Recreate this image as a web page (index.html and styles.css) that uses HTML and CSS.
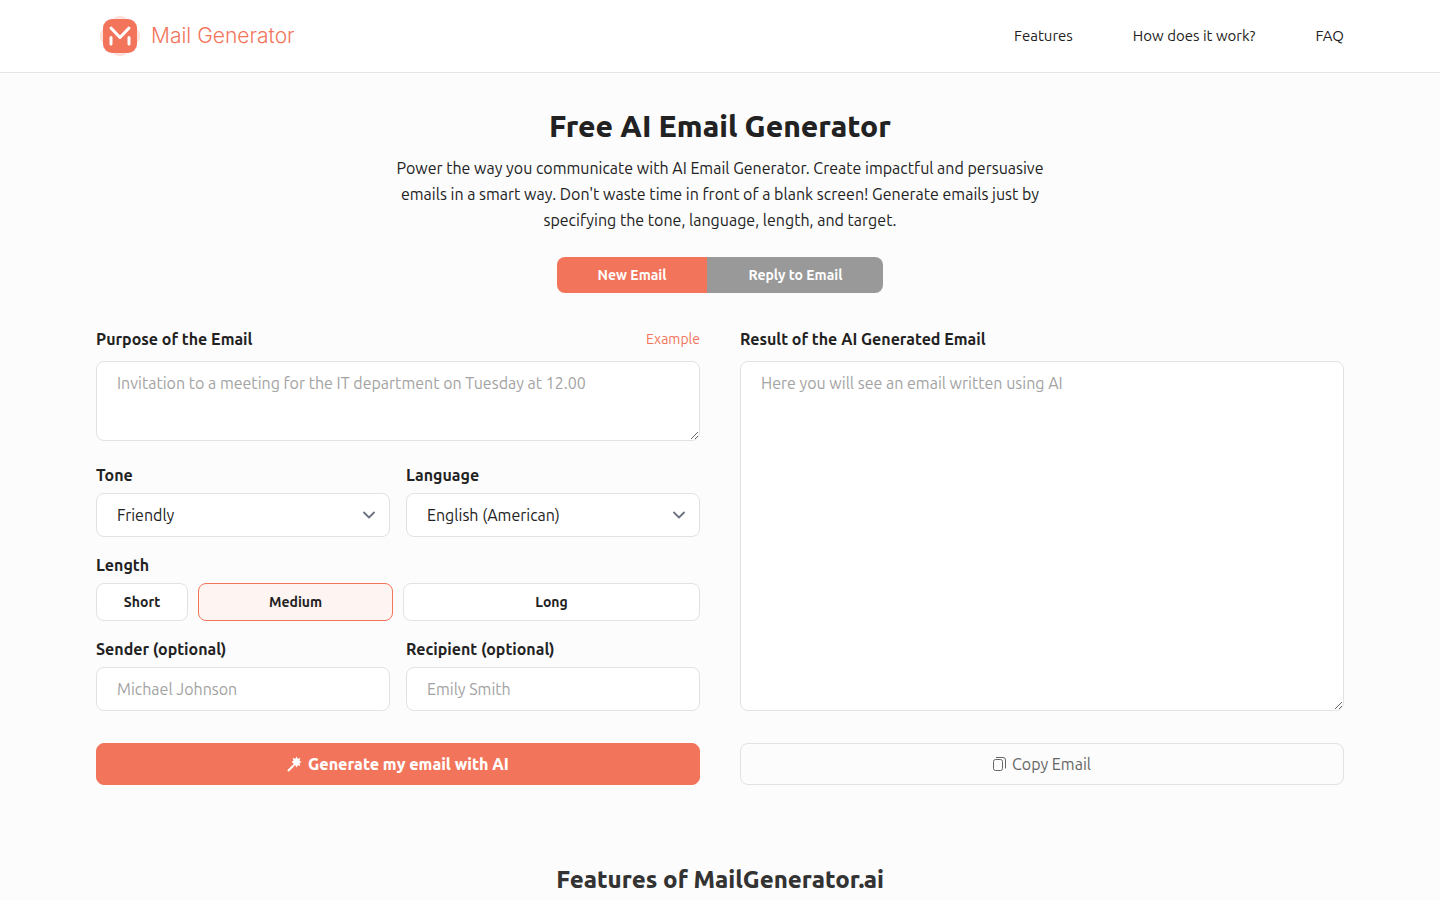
FILE: index.html
```html
<!DOCTYPE html>
<html lang="en">
<head>
    <meta charset="utf-8">
    <title>Free AI Email Generator</title>
    <meta name="viewport" content="width=device-width, initial-scale=1.0">
    <link rel="stylesheet" href="styles.css">
</head>
<body>
    <header class="header">
        <div class="container header-inner">
            <a class="logo" href="#">
                <svg class="logo-icon" width="40" height="40" viewBox="0 0 40 40" fill="none">
                    <rect x="3" y="3" width="34" height="34" rx="9" transform="rotate(45 20 20)" fill="#fde3de"/>
                    <rect x="3" y="3" width="34" height="34" rx="9" fill="#f2755b"/>
                    <path d="M11 12l9 9.500 9-9.500M11 21.500v6.500M29 21.500v6.500" stroke="#fff" stroke-width="3" stroke-linecap="round" stroke-linejoin="round"/>
                </svg>
                <span class="logo-text">Mail Generator</span>
            </a>
            <nav class="nav">
                <a href="#features">Features</a>
                <a href="#how">How does it work?</a>
                <a href="#faq">FAQ</a>
            </nav>
        </div>
    </header>

    <main class="container">
        <section class="intro">
            <h1>Free AI Email Generator</h1>
            <p>Power the way you communicate with AI Email Generator. Create impactful and persuasive emails in a smart way. Don't waste time in front of a blank screen! Generate emails just by specifying the tone, language, length, and target.</p>
            <div class="tabs">
                <button type="button" class="tab tab-active">New Email</button>
                <button type="button" class="tab">Reply to Email</button>
            </div>
        </section>

        <form class="generator">
            <div class="column">
                <div class="label-row">
                    <label for="purpose">Purpose of the Email</label>
                    <a class="example" href="#example">Example</a>
                </div>
                <textarea id="purpose" class="purpose" placeholder="Invitation to a meeting for the IT department on Tuesday at 12.00"></textarea>

                <div class="pair">
                    <div class="field">
                        <label for="tone">Tone</label>
                        <div class="select-wrap">
                            <select id="tone">
                                <option>Friendly</option>
                                <option>Formal</option>
                            </select>
                            <svg class="chevron" width="20" height="20" viewBox="0 0 20 20" fill="none"><path d="M5 7.500l5 5 5-5" stroke="#6b7280" stroke-width="1.800" stroke-linecap="round" stroke-linejoin="round"/></svg>
                        </div>
                    </div>
                    <div class="field">
                        <label for="language">Language</label>
                        <div class="select-wrap">
                            <select id="language">
                                <option>English (American)</option>
                                <option>English (British)</option>
                            </select>
                            <svg class="chevron" width="20" height="20" viewBox="0 0 20 20" fill="none"><path d="M5 7.500l5 5 5-5" stroke="#6b7280" stroke-width="1.800" stroke-linecap="round" stroke-linejoin="round"/></svg>
                        </div>
                    </div>
                </div>

                <div class="field">
                    <span class="label" id="length-label">Length</span>
                    <div class="lengths" role="group" aria-labelledby="length-label">
                        <button type="button" class="length">Short</button>
                        <button type="button" class="length length-active">Medium</button>
                        <button type="button" class="length">Long</button>
                    </div>
                </div>

                <div class="pair">
                    <div class="field">
                        <label for="sender">Sender (optional)</label>
                        <input id="sender" type="text" placeholder="Michael Johnson">
                    </div>
                    <div class="field">
                        <label for="recipient">Recipient (optional)</label>
                        <input id="recipient" type="text" placeholder="Emily Smith">
                    </div>
                </div>

                <button type="submit" class="action generate">
                    <svg width="16" height="16" viewBox="0 0 16 16" fill="#fff"><path d="M14.500 6l-2 1.200.8 2.800-2.600-.8L9.500 11.500l-1.200-2.300-2.600.8.800-2.800L4.500 6l2-1.200L5.700 2l2.600.8L9.500.500l1.200 2.300 2.600-.8-.8 2.800z"/><path d="M1.500 14.500l4.500-4.500" stroke="#fff" stroke-width="2" stroke-linecap="round"/></svg>
                    Generate my email with AI
                </button>
            </div>

            <div class="column">
                <div class="label-row">
                    <label for="result">Result of the AI Generated Email</label>
                </div>
                <textarea id="result" class="result" placeholder="Here you will see an email written using AI"></textarea>
                <button type="button" class="action copy">
                    <svg width="14" height="16" viewBox="0 0 14 16" fill="none" stroke="#666"><rect x=".5" y="3.500" width="9" height="11" rx="2"/><path d="M3 1.500h7a2.500 2.500 0 0 1 2.500 2.500v8.500"/></svg>
                    Copy Email
                </button>
            </div>
        </form>

        <section class="features" id="features">
            <h2>Features of MailGenerator.ai</h2>
        </section>
    </main>
</body>
</html>
```
FILE: styles.css
```css
* {
    box-sizing: border-box;
}

body {
    margin: 0;
    background-color: #fcfcfc;
    color: #222;
    font-family: Ubuntu, "Open Sans", sans-serif;
    font-size: 16px;
    line-height: 24px;
}

a {
    color: inherit;
    text-decoration: none;
}

button,
input,
select,
textarea {
    font: inherit;
    color: inherit;
}

button {
    cursor: pointer;
}

.container {
    max-width: 1280px;
    margin: 0 auto;
    padding: 0 16px;
}

.header {
    background-color: #fff;
    border-bottom: 1px solid #e5e5e9;
}

.header-inner {
    display: flex;
    align-items: center;
    justify-content: space-between;
    height: 72px;
}

.logo {
    display: flex;
    align-items: center;
    gap: 11px;
    padding-left: 4px;
}

.logo-text {
    color: #f2755b;
    font-family: Inter, sans-serif;
    font-size: 21px;
    font-weight: 300;
}

.nav {
    display: flex;
    gap: 60px;
    font-size: 15px;
}

.intro {
    display: flex;
    flex-direction: column;
    align-items: center;
    padding-top: 36px;
    text-align: center;
}

h1 {
    margin: 0 0 12px;
    font-size: 30px;
    font-weight: 800;
    line-height: 34px;
}

.intro p {
    max-width: 672px;
    margin: 0 0 24px;
    line-height: 26px;
}

.tabs {
    display: flex;
    border-radius: 8px;
    overflow: hidden;
}

.tab {
    height: 36px;
    padding: 0 41px;
    border: 0;
    background-color: #999;
    color: #fff;
    font-size: 14px;
    font-weight: 600;
}

.tab-active {
    background-color: #f2755b;
}

.generator {
    display: grid;
    grid-template-columns: 1fr 1fr;
    gap: 40px;
    padding-top: 34px;
}

.column {
    display: flex;
    flex-direction: column;
}

.label-row {
    display: flex;
    justify-content: space-between;
    margin-bottom: 10px;
}

label,
.label {
    font-weight: 600;
}

.example {
    color: #f2755b;
    font-size: 14px;
}

textarea,
select,
input {
    display: block;
    width: 100%;
    padding: 9px 20px;
    border: 1px solid #e2e2e2;
    border-radius: 8px;
    background-color: #fff;
}

textarea::placeholder,
input::placeholder {
    color: #a3a3a3;
}

.purpose {
    height: 80px;
    margin-bottom: 22px;
}

.result {
    flex: 1;
}

select {
    height: 44px;
    appearance: none;
}

input {
    height: 44px;
}

.select-wrap {
    position: relative;
}

.chevron {
    position: absolute;
    top: 12px;
    right: 11px;
    pointer-events: none;
}

.pair {
    display: grid;
    grid-template-columns: 1fr 1fr;
    gap: 16px;
}

.field {
    display: flex;
    flex-direction: column;
    gap: 6px;
}

.pair + .field,
.field + .pair {
    margin-top: 16px;
}

.lengths {
    display: grid;
    grid-template-columns: 92fr 195fr 297fr;
    gap: 10px;
}

.length {
    height: 38px;
    padding: 0;
    border: 1px solid #e2e2e2;
    border-radius: 8px;
    background-color: #fff;
    font-size: 14px;
    font-weight: 600;
}

.length-active {
    border-color: #f2755b;
    background-color: #fef4f2;
}

.action {
    display: flex;
    align-items: center;
    justify-content: center;
    gap: 5px;
    height: 42px;
    margin-top: 32px;
    border: 1px solid #e2e2e2;
    border-radius: 8px;
    background-color: transparent;
}

.generate {
    border-color: #f2755b;
    background-color: #f2755b;
    color: #fff;
    font-weight: 800;
}

.copy {
    color: #666;
}

.features {
    padding: 79px 0 40px;
    text-align: center;
}

h2 {
    margin: 0;
    color: #333;
    font-size: 24px;
    font-weight: 800;
    line-height: 32px;
}
```
